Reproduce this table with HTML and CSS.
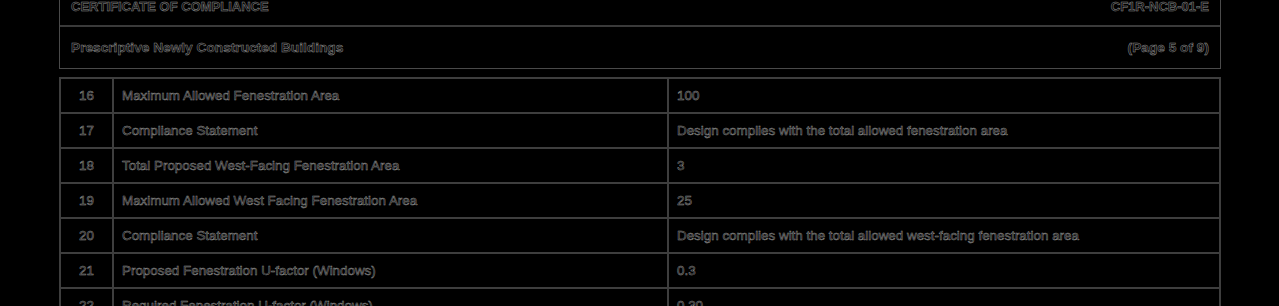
FILE: index.html
```html
<!DOCTYPE html>
<html>
<head>
<meta charset="utf-8">
<link rel="stylesheet" href="styles.css">
</head>
<body>
<div class="page">
  <div class="header">
    <div class="hrow top">
      <span>CERTIFICATE OF COMPLIANCE</span>
      <span>CF1R-NCB-01-E</span>
    </div>
    <div class="hrow sub">
      <span>Prescriptive Newly Constructed Buildings</span>
      <span>(Page 5 of 9)</span>
    </div>
  </div>
  <table class="grid">
    <tr><td class="num">16</td><td class="lbl">Maximum Allowed Fenestration Area</td><td class="val">100</td></tr>
    <tr><td class="num">17</td><td class="lbl">Compliance Statement</td><td class="val">Design complies with the total allowed fenestration area</td></tr>
    <tr><td class="num">18</td><td class="lbl">Total Proposed West-Facing Fenestration Area</td><td class="val">3</td></tr>
    <tr><td class="num">19</td><td class="lbl">Maximum Allowed West Facing Fenestration Area</td><td class="val">25</td></tr>
    <tr><td class="num">20</td><td class="lbl">Compliance Statement</td><td class="val">Design complies with the total allowed west-facing fenestration area</td></tr>
    <tr><td class="num">21</td><td class="lbl">Proposed Fenestration U-factor (Windows)</td><td class="val">0.3</td></tr>
    <tr><td class="num">22</td><td class="lbl">Required Fenestration U-factor (Windows)</td><td class="val">0.30</td></tr>
  </table>
</div>
</body>
</html>
```
FILE: styles.css
```css
html, body {
  margin: 0;
  padding: 0;
  background: #000;
  overflow: hidden;
}
body {
  font-family: "Liberation Sans", Arial, sans-serif;
  color: #0a0a0a;
  -webkit-text-stroke: 0.5px #8c8c8c;
}
.page {
  width: 1162px;
  margin: -12px 0 0 59px;
}
.header {
  border: 1px solid #4a4a4a;
  border-top: none;
}
.hrow {
  display: flex;
  justify-content: space-between;
  align-items: center;
  padding: 0 11px 0 11px;
  font-weight: bold;
}
.hrow.top {
  height: 37px;
  font-size: 13px;
  border-bottom: 2px solid #3a3a3a;
}
.hrow.sub {
  height: 41px;
  font-size: 13.7px;
}
.grid {
  margin-top: 8px;
  width: 1162px;
  border-collapse: collapse;
  table-layout: fixed;
  font-size: 13.4px;
}
.grid td {
  height: 33px;
  border: 2px solid #3e3e3e;
  padding: 0 8px;
  white-space: nowrap;
}
.grid .num {
  width: 51px;
  padding: 0;
  text-align: center;
}
.grid .lbl {
  width: 537px;
}
```
